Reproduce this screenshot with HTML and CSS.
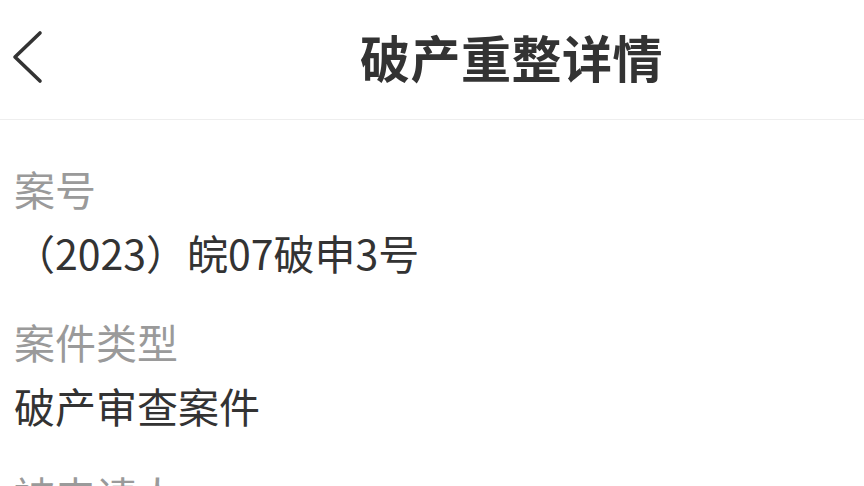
FILE: index.html
```html
<!DOCTYPE html>
<html lang="zh-CN">
<head>
<meta charset="utf-8">
<title>破产重整详情</title>
<link rel="stylesheet" href="styles.css">
</head>
<body>
<header class="nav">
  <div class="nav-back">
    <svg width="40" height="60" viewBox="0 0 40 60" aria-hidden="true">
      <polyline points="28,6 3,30 28,54" fill="none" stroke="#333" stroke-width="3.6" stroke-linecap="round" stroke-linejoin="round"/>
    </svg>
  </div>
  <h1 class="nav-title">破产重整详情</h1>
</header>
<main class="content">
  <section class="field">
    <div class="field-label">案号</div>
    <div class="field-value">（2023）皖07破申3号</div>
  </section>
  <section class="field">
    <div class="field-label">案件类型</div>
    <div class="field-value">破产审查案件</div>
  </section>
  <section class="field">
    <div class="field-label">被申请人</div>
  </section>
</main>
</body>
</html>
```

FILE: styles.css
```css
html, body {
  margin: 0;
  padding: 0;
  background: #ffffff;
  font-family: "Noto Sans CJK SC", "Noto Sans", sans-serif;
  overflow: hidden;
}

.nav {
  height: 111px;
  padding-bottom: 8px;
  border-bottom: 1px solid #eeeeee;
  display: flex;
  align-items: center;
}

.nav-back {
  width: 40px;
  height: 60px;
  margin-left: 12px;
  margin-top: 2px;
  display: flex;
}

.nav-title {
  margin: 0 0 0 308px;
  font-size: 50px;
  font-weight: 700;
  color: #333333;
  line-height: 60px;
  letter-spacing: 0.5px;
}

.content {
  padding: 36px 14px 0 14px;
}

.field {
  margin-bottom: 25px;
}

.field-label {
  font-size: 41px;
  line-height: 64px;
  color: #9a9a9a;
}

.field-value {
  font-size: 41px;
  line-height: 64px;
  color: #333333;
}
```
